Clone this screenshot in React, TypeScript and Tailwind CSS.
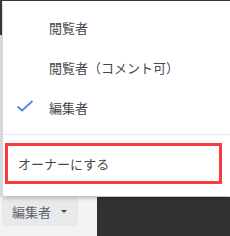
import React from "react";

export default function App() {
  const font = { fontFamily: '"Noto Sans CJK JP", "Noto Sans", sans-serif' };
  return (
    <div className="relative w-[230px] h-[236px] overflow-hidden bg-[#f1f3f4]" style={font}>
      {/* background page */}
      <div className="absolute inset-0 flex flex-col">
        <div className="h-[1px] bg-[#3a3a3a]" />
        <div className="flex flex-1">
          <div className="w-[97px] flex flex-col">
            <div className="flex flex-1">
              <div className="w-[2px] flex flex-col">
                <div className="h-[34px] bg-[#3a3a3a]" />
                <div className="flex-1 bg-[#e2e3e4]" />
              </div>
              <div className="flex-1" />
            </div>
            <div className="h-[39px] flex flex-col">
              <div className="h-[29px] w-[76px] ml-[2px] bg-[#e8e9ea] rounded-b-[3px] flex items-center pl-[10px] text-[13px] text-[#5f6368]">
                <span>編集者</span>
                <span className="ml-[10px] w-0 h-0 border-l-[3px] border-r-[3px] border-t-[3px] border-l-transparent border-r-transparent border-t-[#444]" />
              </div>
            </div>
          </div>
          <div className="flex-1 flex flex-col">
            <div className="flex-1" />
            <div className="h-[39px] bg-[#313131]" />
          </div>
        </div>
      </div>

      {/* menu overlay */}
      <div className="absolute left-[3px] top-[1px] w-[227px] h-[195px] bg-white shadow-[0_2px_4px_rgba(0,0,0,0.25)] rounded-bl-[3px] flex flex-col text-[13px] text-[#45484c]">
        <div className="h-[7px]" />
        <div className="h-[40px] flex items-center pl-[46px]">閲覧者</div>
        <div className="h-[40px] flex items-center pl-[46px]">閲覧者（コメント可）</div>
        <div className="h-[40px] flex items-center relative pl-[46px]">
          <svg className="absolute left-[13px] top-[12px]" width="18" height="12" viewBox="0 0 18 12">
            <path d="M1.5 6.5 L6 10.5 L16.5 1" fill="none" stroke="#4a86f0" strokeWidth="1.8" />
          </svg>
          編集者
        </div>
        <div className="h-[6px]" />
        <div className="h-[1px] bg-[#e8eaed]" />
        <div className="h-[8px]" />
        <div className="mx-[2px] w-[217px] h-[41px] border-[3px] border-[#f73b3f] flex items-center pl-[10px] text-[#45484c]">
          オーナーにする
        </div>
      </div>
    </div>
  );
}
